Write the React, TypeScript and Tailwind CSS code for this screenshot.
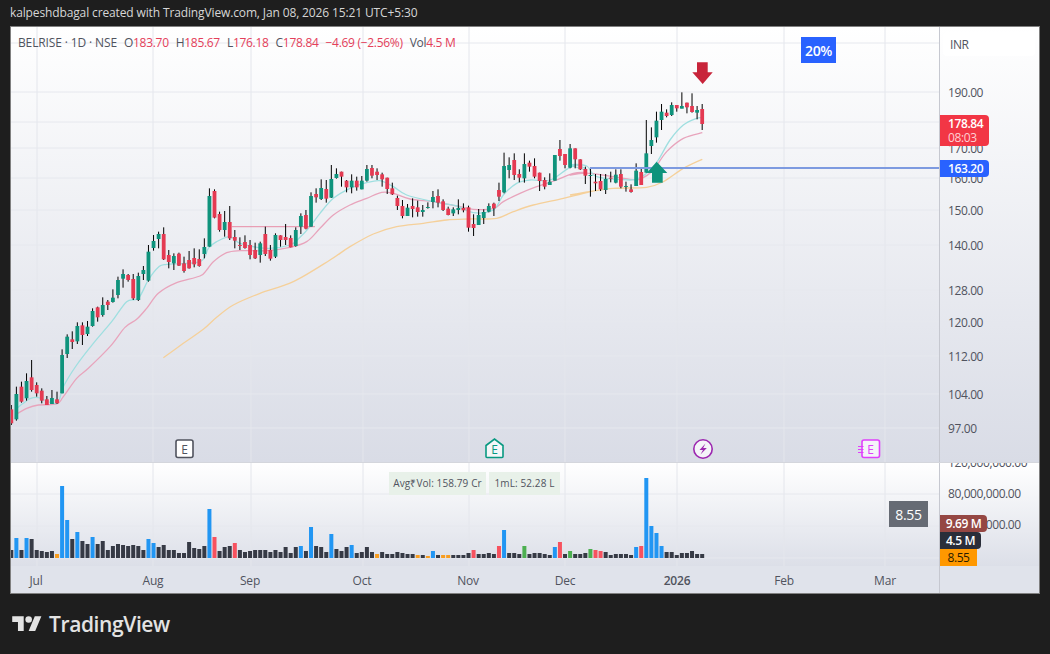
type Pt = [number, number];

// candle rows: wickTop, bodyTop, bodyBottom, wickBottom, colour. y is in 3x units from y=130
const candles: [number, number, number, number, "g" | "r"][] = [
  [825, 838, 880, 885, "r"], [770, 792, 868, 872, "g"], [755, 770, 815, 818, "r"], [730, 753, 805, 812, "g"], [690, 742, 780, 785, "r"],
  [757, 765, 790, 800, "r"], [775, 782, 812, 820, "r"], [798, 808, 825, 825, "r"], [780, 804, 822, 822, "g"], [785, 808, 820, 822, "r"],
  [658, 675, 790, 790, "g"], [613, 620, 672, 684, "g"], [604, 628, 636, 657, "r"], [577, 588, 634, 642, "g"], [577, 586, 615, 645, "r"],
  [573, 590, 612, 618, "g"], [535, 543, 588, 590, "g"], [530, 532, 562, 575, "r"], [502, 525, 555, 560, "g"], [510, 515, 525, 540, "r"],
  [478, 503, 516, 518, "g"], [440, 450, 495, 505, "g"], [418, 432, 446, 473, "g"], [432, 435, 450, 455, "r"], [432, 447, 505, 510, "r"],
  [428, 438, 510, 513, "g"], [408, 420, 432, 450, "g"], [345, 365, 452, 455, "g"], [315, 333, 354, 362, "g"], [305, 312, 327, 355, "g"],
  [292, 312, 388, 390, "r"], [360, 375, 396, 415, "r"], [370, 378, 400, 420, "g"], [368, 371, 407, 408, "r"], [380, 400, 423, 428, "r"],
  [363, 390, 415, 416, "r"], [355, 384, 403, 412, "r"], [358, 387, 408, 410, "r"], [325, 351, 372, 385, "g"], [175, 198, 350, 350, "g"],
  [178, 183, 263, 265, "r"], [245, 252, 300, 305, "r"], [243, 276, 300, 320, "g"], [228, 276, 325, 330, "r"], [300, 321, 332, 355, "r"],
  [322, 345, 347, 360, "r"], [316, 336, 354, 356, "r"], [330, 345, 375, 388, "r"], [338, 360, 385, 387, "r"], [335, 340, 375, 398, "g"],
  [290, 312, 372, 378, "r"], [345, 360, 386, 392, "r"], [310, 315, 380, 384, "g"], [316, 316, 330, 350, "r"], [282, 321, 330, 345, "r"],
  [316, 324, 352, 352, "r"], [292, 300, 348, 350, "g"], [250, 258, 290, 312, "g"], [240, 255, 296, 298, "r"], [187, 198, 290, 290, "g"],
  [175, 192, 202, 218, "r"], [148, 174, 207, 210, "g"], [150, 177, 206, 218, "r"], [105, 147, 203, 204, "g"], [115, 132, 144, 146, "g"],
  [125, 125, 140, 170, "r"], [150, 152, 172, 187, "r"], [133, 152, 172, 190, "g"], [140, 152, 172, 182, "r"], [138, 152, 178, 178, "g"],
  [105, 117, 152, 155, "g"], [105, 114, 137, 145, "r"], [115, 125, 135, 150, "r"], [128, 133, 148, 170, "r"], [143, 143, 177, 192, "r"],
  [158, 175, 193, 195, "r"], [197, 204, 228, 240, "r"], [210, 228, 258, 265, "r"], [222, 233, 258, 258, "g"], [205, 228, 237, 262, "r"],
  [212, 232, 246, 260, "r"], [225, 240, 246, 260, "g"], [217, 231, 233, 236, "g"], [183, 201, 216, 235, "g"], [178, 198, 218, 232, "r"],
  [208, 214, 240, 243, "r"], [230, 236, 255, 256, "r"], [232, 238, 250, 258, "g"], [208, 234, 240, 253, "g"], [220, 234, 241, 247, "r"],
  [227, 232, 293, 305, "r"], [253, 282, 294, 318, "r"], [237, 255, 285, 285, "g"], [238, 246, 264, 282, "g"], [220, 228, 245, 247, "g"],
  [218, 221, 235, 258, "r"], [158, 180, 200, 213, "r"], [68, 108, 187, 190, "g"], [82, 105, 120, 145, "g"], [70, 90, 135, 150, "r"],
  [118, 132, 143, 157, "r"], [70, 102, 145, 158, "g"], [92, 98, 110, 125, "r"], [85, 108, 140, 145, "r"], [128, 128, 153, 183, "r"],
  [142, 150, 170, 178, "r"], [130, 155, 165, 165, "g"], [75, 75, 152, 152, "g"], [30, 57, 78, 92, "r"], [72, 72, 105, 115, "r"],
  [42, 55, 113, 115, "g"], [55, 55, 88, 115, "r"], [88, 88, 118, 120, "r"], [110, 117, 137, 162, "r"], [113, 135, 137, 200, "g"],
  [132, 155, 160, 183, "r"], [132, 153, 178, 183, "r"], [132, 147, 180, 192, "g"], [125, 143, 146, 157, "r"], [118, 134, 158, 160, "g"],
  [118, 132, 170, 175, "r"], [155, 168, 170, 185, "g"], [163, 178, 186, 188, "r"], [100, 122, 168, 168, "g"], [115, 126, 165, 165, "r"],
  [-30, 70, 128, 128, "g"], [-8, 30, 48, 72, "g"], [-55, -28, 22, 38, "g"], [-78, -55, -30, 0, "g"], [-62, -52, -42, -38, "r"],
  [-83, -75, -45, -42, "g"], [-75, -75, -65, -55, "r"], [-113, -72, -64, -65, "g"], [-82, -82, -68, -50, "r"], [-110, -72, -54, -52, "r"],
  [-72, -60, -52, -32, "g"], [-78, -63, -18, 0, "r"],
];

// volume heights in 3x units, b blue, k dark, r red, g green, o orange
const vols: [number, string][] = [
  [24, "k"], [60, "b"], [24, "k"], [60, "b"], [57, "k"], [24, "k"], [21, "k"], [18, "k"], [21, "k"], [12, "o"],
  [216, "b"], [114, "b"], [57, "k"], [78, "b"], [51, "k"], [42, "k"], [63, "b"], [42, "k"], [51, "k"], [24, "k"],
  [36, "k"], [42, "k"], [39, "k"], [36, "k"], [39, "k"], [36, "k"], [24, "k"], [57, "b"], [45, "b"], [33, "k"],
  [39, "k"], [24, "k"], [24, "k"], [15, "k"], [15, "k"], [48, "k"], [30, "k"], [27, "k"], [36, "k"], [147, "b"],
  [63, "r"], [21, "k"], [33, "k"], [36, "k"], [45, "r"], [24, "k"], [18, "k"], [21, "k"], [24, "k"], [24, "k"],
  [24, "k"], [18, "k"], [24, "k"], [18, "k"], [33, "k"], [15, "k"], [33, "k"], [36, "b"], [21, "k"], [93, "b"],
  [36, "k"], [33, "k"], [18, "k"], [72, "b"], [27, "k"], [21, "k"], [33, "k"], [39, "b"], [15, "k"], [18, "k"],
  [33, "k"], [18, "k"], [12, "o"], [18, "k"], [12, "k"], [12, "k"], [18, "k"], [15, "k"], [12, "k"], [12, "k"],
  [9, "o"], [9, "k"], [6, "o"], [21, "b"], [9, "k"], [9, "o"], [9, "o"], [9, "k"], [9, "k"], [9, "k"],
  [15, "k"], [24, "r"], [12, "k"], [12, "k"], [15, "k"], [12, "k"], [36, "r"], [84, "b"], [15, "k"], [15, "k"],
  [12, "k"], [36, "g"], [12, "k"], [15, "k"], [15, "k"], [12, "k"], [9, "k"], [33, "b"], [48, "r"], [12, "k"],
  [21, "g"], [12, "k"], [12, "k"], [15, "k"], [27, "g"], [24, "r"], [21, "r"], [18, "k"], [9, "k"], [12, "k"],
  [12, "k"], [12, "k"], [9, "k"], [33, "b"], [36, "r"], [240, "b"], [96, "b"], [75, "b"], [36, "b"], [18, "k"],
  [18, "k"], [9, "k"], [15, "k"], [15, "k"], [21, "k"], [12, "k"], [12, "k"],
];

const volColor: Record<string, string> = { b: "#2196f3", k: "#363a45", r: "#f7525f", g: "#4caf50", o: "#f89d1f" };

const candleX = (i: number) => 11.3 + i * 5.08;
const ry = (v: number) => 130 + v / 3;

const a = (pts: Pt[]): Pt[] => pts.map(([x, y]) => [x / 3, 130 + y / 3]);
const b = (pts: Pt[]): Pt[] => pts.map(([x, y]) => [300 + x / 3, 130 + y / 3]);
const c = (pts: Pt[]): Pt[] => pts.map(([x, y]) => [570 + x / 3, 80 + y / 3]);

const cyan: Pt[] = [
  ...a([[50, 835], [70, 820], [90, 806], [115, 803], [170, 820], [190, 770], [230, 705], [280, 640], [335, 575], [380, 515], [415, 505], [445, 450], [475, 412], [500, 403], [600, 395], [625, 355], [650, 335], [690, 320], [720, 340], [800, 355], [870, 345]]),
  ...b([[0, 322], [30, 290], [60, 250], [100, 205], [150, 175], [200, 158], [240, 152], [280, 170], [320, 195], [400, 215], [470, 228], [520, 248], [580, 240], [610, 195], [650, 160], [690, 150], [750, 150], [800, 118], [830, 105], [860, 120]]),
  ...c([[0, 255], [50, 258], [80, 290], [180, 300], [215, 290], [240, 270], [265, 240], [300, 180], [340, 135], [380, 115], [397, 113]]),
];
const pink: Pt[] = [
  ...a([[50, 852], [80, 835], [115, 825], [170, 822], [190, 800], [230, 745], [265, 715], [330, 650], [375, 592], [410, 568], [440, 535], [475, 490], [525, 460], [600, 438], [620, 420], [640, 395], [680, 368], [720, 362], [800, 362], [870, 352]]),
  ...b([[20, 335], [60, 295], [100, 255], [150, 225], [200, 205], [245, 187], [280, 190], [330, 207], [400, 215], [470, 228], [520, 238], [580, 236], [610, 215], [660, 190], [710, 170], [770, 150], [820, 130], [860, 128]]),
  ...c([[0, 285], [60, 280], [180, 298], [215, 295], [250, 270], [290, 215], [340, 175], [397, 158]]),
];
const orange: Pt[] = [
  ...a([[490, 683], [550, 640], [610, 598], [650, 562], [700, 525], [780, 490], [880, 455]]),
  ...b([[90, 390], [150, 350], [220, 312], [290, 290], [370, 280], [440, 270], [510, 267], [590, 265], [640, 245], [700, 225], [790, 205], [870, 185]]),
  ...c([[0, 345], [60, 335], [130, 325], [230, 322], [280, 305], [340, 265], [397, 238]]),
];

// catmull-rom through the points
function smooth(p: Pt[]) {
  let d = `M${p[0][0]} ${p[0][1]}`;
  for (let i = 0; i < p.length - 1; i++) {
    const p0 = p[i - 1] || p[i];
    const p1 = p[i];
    const p2 = p[i + 1];
    const p3 = p[i + 2] || p2;
    d += `C${p1[0] + (p2[0] - p0[0]) / 6} ${p1[1] + (p2[1] - p0[1]) / 6} ${p2[0] - (p3[0] - p1[0]) / 6} ${p2[1] - (p3[1] - p1[1]) / 6} ${p2[0]} ${p2[1]}`;
  }
  return d;
}

const gridX = [37, 153, 251, 363, 469, 565, 677, 784, 885];
const gridY = [43, 92, 122, 148, 178, 210, 245, 290, 322, 356, 394, 428];
const prices: [string, number][] = [["190.00", 92], ["170.00", 148], ["160.00", 178], ["150.00", 210], ["140.00", 245], ["128.00", 290], ["120.00", 322], ["112.00", 356], ["104.00", 394], ["97.00", 428]];
const months: [string, number][] = [["Jul", 36], ["Aug", 153], ["Sep", 250], ["Oct", 362], ["Nov", 468], ["Dec", 565], ["2026", 677], ["Feb", 784], ["Mar", 885]];
const legend: [string, string][] = [["O", "183.70"], ["H", "185.67"], ["L", "176.18"], ["C", "178.84"]];

function MainPlot() {
  return (
    <svg viewBox="11 27 928 435" className="h-full w-full">
      {gridX.map((x) => <line key={x} x1={x} x2={x} y1={27} y2={462} stroke="#e4e6ec" />)}
      {gridY.map((y) => <line key={y} x1={11} x2={939} y1={y} y2={y} stroke="#e6e8ee" />)}
      <path d={smooth(orange)} fill="none" stroke="#f5d09a" strokeWidth="1.3" />
      <path d={smooth(pink)} fill="none" stroke="#e8a4bc" strokeWidth="1.3" />
      <path d={smooth(cyan)} fill="none" stroke="#9fdfe0" strokeWidth="1.3" />
      <line x1={232} x2={315} y1={226.7} y2={226.7} stroke="#e88ca5" />
      {candles.map(([wt, bt, bb, wb, col], i) => {
        const x = candleX(i);
        const fill = col === "g" ? "#0f937c" : "#e43a52";
        return (
          <g key={i}>
            <line x1={x} x2={x} y1={ry(wt)} y2={ry(wb)} stroke="#000" />
            <rect x={x - 1.9} width={3.8} y={ry(bt)} height={Math.max(1, (bb - bt) / 3)} fill={fill} />
          </g>
        );
      })}
      <line x1={590} x2={939} y1={168} y2={168} stroke="#7d9ae0" strokeWidth="2" />
      <polygon points="656.7,161.7 667.3,173 662.7,173 662.7,182.7 652,182.7 652,173 646.7,173" fill="#0f937c" />
      <polygon points="697,62.3 707.7,62.3 707.7,72.3 712.7,72.3 702.7,84 692.3,72.3 697,72.3" fill="#c8243a" />
      {/* event markers */}
      <rect x={176} y={440} width={17} height={17.5} rx={2} fill="#fff" stroke="#50535e" strokeWidth="1.6" />
      <text x={184.5} y={453.5} textAnchor="middle" fontSize="12" fill="#50535e">E</text>
      <path d="M486 445.5 L494.5 439 L503 445.5 V456.5 Q503 457.5 502 457.5 H487 Q486 457.5 486 456.5 Z" fill="#f4f6f8" stroke="#089981" strokeWidth="1.6" />
      <text x={494.5} y={453.5} textAnchor="middle" fontSize="12" fill="#089981">E</text>
      <circle cx={703} cy={449} r={9.2} fill="#f4f4f8" stroke="#9c27b0" strokeWidth="1.6" />
      <path d="M705.5 443.5 L699.5 450 H703 L700.5 454.5 L706.8 448 H703.2 Z" fill="#9c27b0" />
      <rect x={862} y={440} width={17.5} height={17.5} rx={2} fill="#f4f4f8" stroke="#e040fb" strokeWidth="1.6" />
      <path d="M858 446.5 H863.5 M858 449.5 H863.5 M858 452.5 H863.5" stroke="#e040fb" strokeWidth="1.2" />
      <text x={870.5} y={453.5} textAnchor="middle" fontSize="12" fill="#e040fb">E</text>
    </svg>
  );
}

function VolumePlot() {
  return (
    <svg viewBox="11 463 928 103" className="h-full w-full">
      {gridX.map((x) => <line key={x} x1={x} x2={x} y1={463} y2={566} stroke="#e4e6ec" />)}
      {[494, 526, 558].map((y) => <line key={y} x1={11} x2={939} y1={y} y2={y} stroke="#e6e8ee" />)}
      {vols.map(([h, col], i) => (
        <rect key={i} x={candleX(i) - 2} width={4} y={558 - h / 3} height={h / 3} fill={volColor[col]} />
      ))}
    </svg>
  );
}

export default function App() {
  return (
    <div className="flex h-[654px] w-[1050px] flex-col overflow-hidden bg-[#1e1e1e] font-['Open_Sans',sans-serif]">
      <div className="flex h-[26px] shrink-0 items-center px-[10px] text-[12px] font-medium tracking-[-0.13px] text-[#d6d6d6]">
        kalpeshdbagal created with TradingView.com, Jan 08, 2026 15:21 UTC+5:30
      </div>

      <div className="mx-[10px] flex h-[568px] shrink-0 flex-col border border-[#808080] text-[#50535e]">
        <div className="flex h-[435px] shrink-0 bg-[linear-gradient(#ffffff,#d9dce6)]">
          <div className="relative w-[928px] shrink-0">
            <MainPlot />
            <div className="absolute left-[7px] top-[8px] flex items-center gap-[7px] text-[12px] leading-4 tracking-[-0.3px]">
              <span className="tracking-[-0.13px]">BELRISE · 1D · NSE</span>
              {legend.map(([k, v]) => (
                <span key={k}>
                  {k}
                  <span className="text-[#e4405a]">{v}</span>
                </span>
              ))}
              <span className="text-[#e4405a]">−4.69 (−2.56%)</span>
              <span>
                Vol<span className="text-[#e4405a]">4.5 M</span>
              </span>
            </div>
            <div className="absolute left-[790px] top-[10px] flex h-[26px] w-[35px] items-center justify-center bg-[#2962ff] text-[14px] font-semibold tracking-[-0.4px] text-white">
              20%
            </div>
          </div>
          <div className="relative flex-1 border-l border-[#c6c8d0] text-[12px] tracking-[-0.4px]">
            <div className="absolute left-[3px] right-[4px] top-[5px] flex h-[24px] items-center rounded bg-white pl-[7px] pt-[2px] text-[12px]">
              INR
            </div>
            {prices.map(([p, y]) => (
              <span key={p} className="absolute left-[8px] -translate-y-1/2" style={{ top: y - 26 }}>
                {p}
              </span>
            ))}
            <div className="absolute left-0 top-[88px] flex h-[31px] w-[49px] flex-col justify-center rounded-r-sm bg-[#f23645] pl-2 text-[12px] font-semibold leading-[14px] text-white">
              178.84
              <span className="font-normal text-[#ffd0d4]">08:03</span>
            </div>
            <div className="absolute left-0 top-[133px] flex h-[17px] w-[49px] items-center rounded-r-sm bg-[#2962ff] pl-2 text-[12px] font-semibold text-white">
              163.20
            </div>
          </div>
        </div>

        <div className="flex h-[104px] shrink-0 border-t border-[#d4d6dc] bg-[linear-gradient(#ffffff,#dcdfe8)]">
          <div className="relative w-[928px] shrink-0">
            <VolumePlot />
            <div className="absolute left-[378px] top-[9px] flex h-[23px] items-center gap-[3px] text-[10px] tracking-[0.1px]">
              <span className="flex h-full w-[97px] items-center justify-center bg-[#e8f1e9]">Avg₹Vol: 158.79 Cr</span>
              <span className="flex h-full w-[71px] items-center justify-center bg-[#e8f1e9]">1mL: 52.28 L</span>
            </div>
            <div className="absolute left-[878px] top-[38px] flex h-[26px] w-[39px] items-center justify-center bg-[#666b74] text-[14px] tracking-[-0.3px] text-white">
              8.55
            </div>
          </div>
          <div className="relative flex-1 overflow-hidden border-l border-[#c6c8d0] text-[12px] tracking-[-0.4px]">
            <span className="absolute left-[8px] top-0 -translate-y-1/2">120,000,000.00</span>
            <span className="absolute left-[8px] top-[31px] -translate-y-1/2">80,000,000.00</span>
            <span className="absolute left-[8px] top-[62px] -translate-y-1/2">40,000,000.00</span>
            <div className="absolute left-0 top-[52px] flex h-[17px] w-[47px] items-center justify-center rounded-r-sm bg-[#954743] text-[12px] font-semibold text-white">
              9.69 M
            </div>
            <div className="absolute left-0 top-[69px] flex h-[17px] w-[41px] items-center justify-center rounded-r-sm bg-[#2a2e39] text-[12px] font-semibold text-white">
              4.5 M
            </div>
            <div className="absolute left-0 top-[86px] flex h-[17px] w-[37px] items-center justify-center bg-[#ff9800] text-[12px] text-[#2a1c00]">
              8.55
            </div>
          </div>
        </div>

        <div className="flex min-h-0 flex-1 bg-[#e0e3eb]">
          <div className="relative w-[928px] shrink-0 text-[12px] tracking-[-0.2px]">
            {months.map(([m, x]) => (
              <span
                key={m}
                className={m === "2026" ? "absolute top-[6px] -translate-x-1/2 font-semibold" : "absolute top-[6px] -translate-x-1/2"}
                style={{ left: x - 11 }}
              >
                {m}
              </span>
            ))}
          </div>
          <div className="flex-1 border-l border-[#c6c8d0]" />
        </div>
      </div>

      <div className="flex flex-1 items-center gap-[7px] pl-[12px]">
        <svg viewBox="0 0 36 28" className="h-[23px] w-[30px]" fill="#e3e3e3">
          <path d="M14 22H7V11H0V4h14v18zM28 22h-8l7.5-18h8L28 22z" />
          <circle cx="20" cy="8" r="4" />
        </svg>
        <span className="text-[21px] font-semibold leading-none tracking-[-0.4px] text-[#e3e3e3]">TradingView</span>
      </div>
    </div>
  );
}
